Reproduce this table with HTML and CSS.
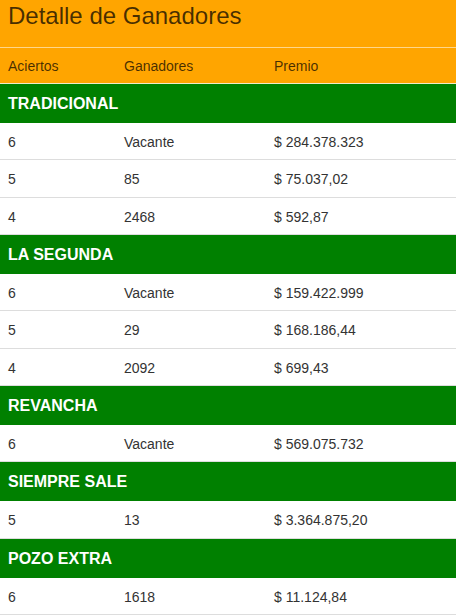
FILE: index.html
```html
<!DOCTYPE html>
<html lang="es">
<head>
<meta charset="utf-8">
<title>Detalle de Ganadores</title>
<link rel="stylesheet" href="styles.css">
</head>
<body>
<div class="page">
  <h1 class="title">Detalle de Ganadores</h1>
  <div class="row head">
    <span>Aciertos</span><span>Ganadores</span><span>Premio</span>
  </div>

  <div class="section">TRADICIONAL</div>
  <div class="row"><span>6</span><span>Vacante</span><span>$ 284.378.323</span></div>
  <div class="row"><span>5</span><span>85</span><span>$ 75.037,02</span></div>
  <div class="row"><span>4</span><span>2468</span><span>$ 592,87</span></div>

  <div class="section">LA SEGUNDA</div>
  <div class="row"><span>6</span><span>Vacante</span><span>$ 159.422.999</span></div>
  <div class="row"><span>5</span><span>29</span><span>$ 168.186,44</span></div>
  <div class="row"><span>4</span><span>2092</span><span>$ 699,43</span></div>

  <div class="section">REVANCHA</div>
  <div class="row"><span>6</span><span>Vacante</span><span>$ 569.075.732</span></div>

  <div class="section">SIEMPRE SALE</div>
  <div class="row"><span>5</span><span>13</span><span>$ 3.364.875,20</span></div>

  <div class="section">POZO EXTRA</div>
  <div class="row"><span>6</span><span>1618</span><span>$ 11.124,84</span></div>
</div>
</body>
</html>
```
FILE: styles.css
```css
html, body {
  margin: 0;
  padding: 0;
  background: #fff;
}
body {
  font-family: "Liberation Sans", Arial, sans-serif;
  font-size: 14px;
  color: #333;
}
.page {
  width: 456px;
}
.title {
  margin: 0;
  box-sizing: border-box;
  height: 48px;
  padding: 1px 8px 0;
  font-size: 24px;
  font-weight: normal;
  line-height: 30px;
  background: #ffa500;
  color: rgba(0, 0, 0, 0.72);
  border-bottom: 1px solid #ffd68a;
}
.row {
  box-sizing: border-box;
  display: grid;
  grid-template-columns: 116px 150px 1fr;
  align-items: center;
  height: 37.33px;
  padding-top: 2px;
  border-bottom: 1px solid #ddd;
  line-height: 20px;
}
.row span {
  padding: 0 8px;
}
.head {
  height: 36px;
  padding-top: 1px;
  background: #ffa500;
  color: rgba(0, 0, 0, 0.72);
  border-bottom: 1px solid #f0ecc8;
}
.section {
  box-sizing: border-box;
  height: 39px;
  display: flex;
  align-items: center;
  padding: 1px 8px 0;
  background: #008000;
  color: #fff;
  font-weight: bold;
  font-size: 16px;
}
```
